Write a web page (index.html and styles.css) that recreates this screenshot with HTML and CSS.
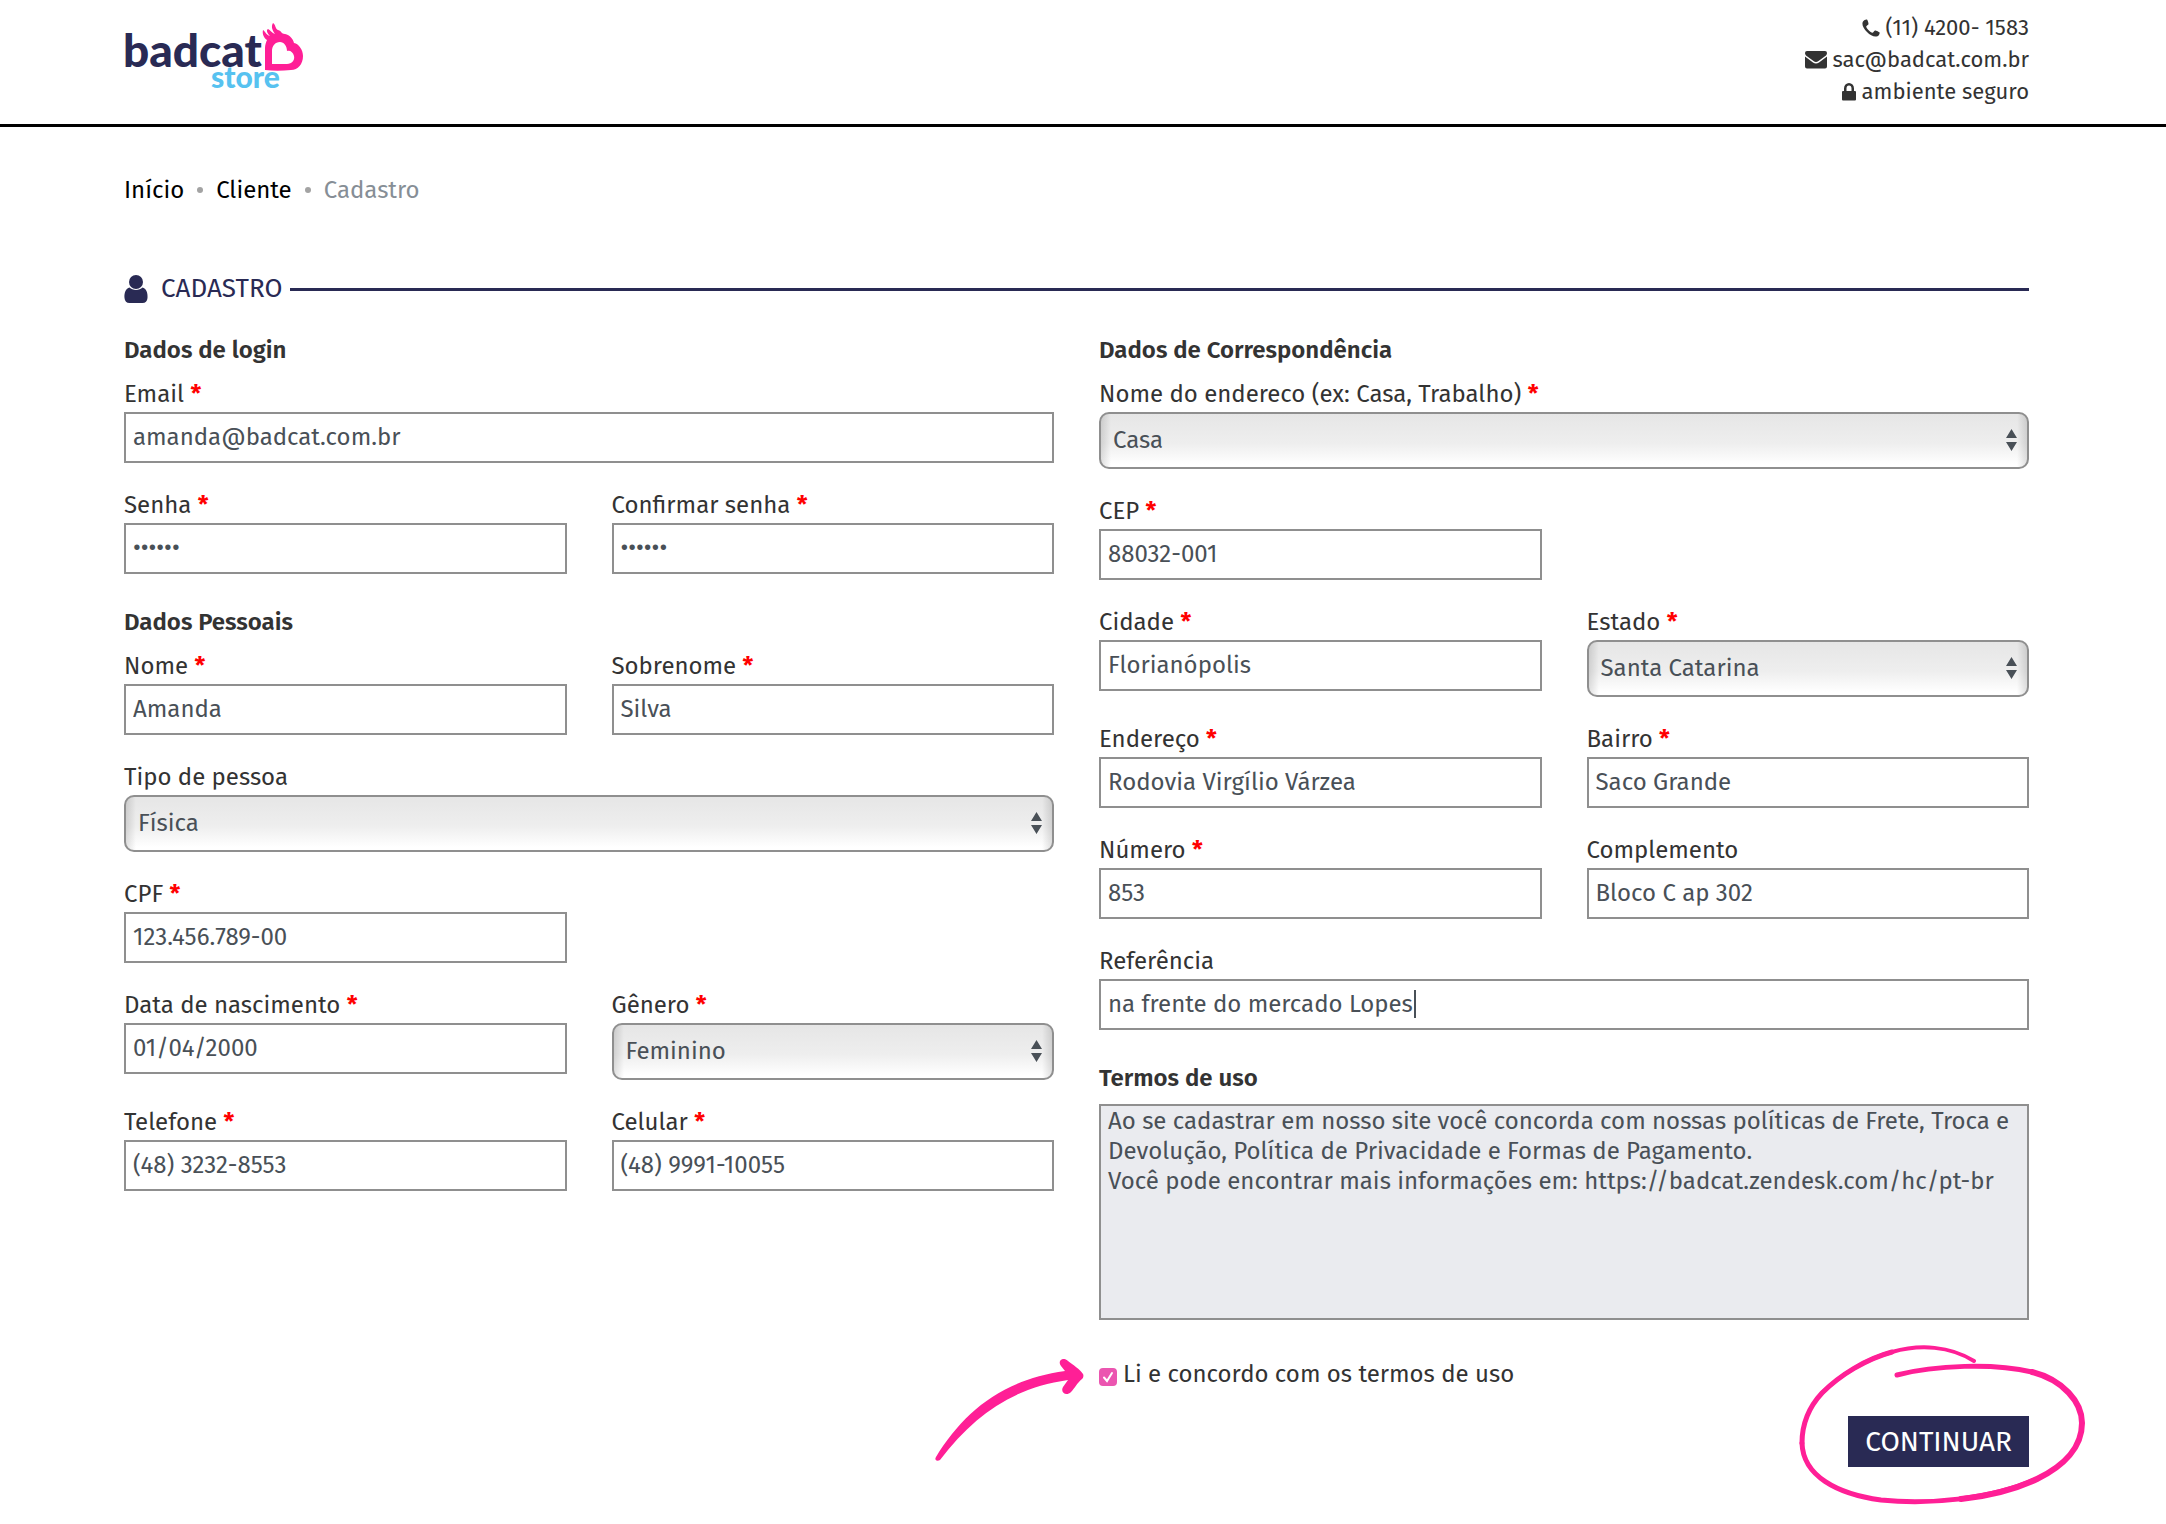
FILE: index.html
```
<!DOCTYPE html>
<html lang="pt-BR">
<head>
  <meta charset="utf-8">
  <meta name="viewport" content="width=device-width, initial-scale=1">
  <title>Cadastro - Badcat Store</title>
  <link rel="stylesheet" href="styles.css">
</head>
<body>
  <header class="site-header">
    <a class="logo" href="#" aria-label="badcat store">
      <svg class="logo-art" viewBox="0 0 184 74" width="184" height="74" aria-hidden="true">
        <text class="logo-name" x="-1" y="49">badcat</text>
        <text class="logo-tag" x="87" y="70">store</text>
        <path fill="#ff1f96" fill-rule="evenodd" d="M141 52V30C141 27 142 24 143 22C140 20 138 16 139 12C141 13 142 17 146 18C143 15 142 12 144 11C146 12 148 15 151 16C148 12 147 8 149 5C152 7 151 11 154 12C158 13 157 16 161 16C166 17 169 21 170 25C175 26 179 32 179 38C179 46 174 52 167 52C158 53 149 53 141 52ZM148 46H163C168 46 171 42 170 38C169 34 166 32 163 33C163 28 160 24 156 24C151 24 148 28 148 33Z"/>
      </svg>
    </a>
    <address class="contact">
      <span class="contact-line">
        <svg viewBox="0 0 18 18" width="18" height="18" aria-hidden="true"><path d="M1 2.500C2 1 4 .2 5 .6C5.600 1 6.500 3.800 6.500 5C6.500 6 4.300 6.800 4.200 7.600C4.200 9.300 8.700 13.700 10.400 13.800C11.300 13.800 12 11.600 13 11.500C14 11.400 17.300 13 17.600 13.500C17.900 14.500 17 16.500 15.500 17.200C12.500 18.500 8.500 16.600 5 13C1.500 9.500-.7 5.500 1 2.500Z"/></svg>
        (11) 4200- 1583
      </span>
      <a class="contact-line" href="mailto:sac@badcat.com.br">
        <svg viewBox="0 0 22 18" width="22" height="18" aria-hidden="true"><path d="M2 0H20Q22 0 22 2C22 3.500 21 4.500 20 5.300L13.500 10Q11 12 8.500 10L2 5.300C1 4.500 0 3.500 0 2Q0 0 2 0ZM0 5.500L8 11.500Q11 13.500 14 11.500L22 5.500V15.500Q22 17.500 20 17.500H2Q0 17.500 0 15.500Z"/></svg>
        sac@badcat.com.br
      </a>
      <span class="contact-line">
        <svg viewBox="0 0 14 18" width="14" height="18" aria-hidden="true"><path fill-rule="evenodd" d="M2 8V5.500A5 5.500 0 0 1 12 5.500V8H13Q14 8 14 9V16.500Q14 17.500 13 17.500H1Q0 17.500 0 16.500V9Q0 8 1 8ZM4.500 8H9.500V5.500A2.500 3 0 0 0 4.500 5.500Z"/></svg>
        ambiente seguro
      </span>
    </address>
  </header>

  <main class="page">
    <nav class="breadcrumb" aria-label="Navegação">
      <a class="crumb" href="#">Início</a>
      <span class="crumb-dot"></span>
      <a class="crumb" href="#">Cliente</a>
      <span class="crumb-dot"></span>
      <span class="crumb-current" aria-current="page">Cadastro</span>
    </nav>

    <h1 class="page-title">
      <svg viewBox="0 0 24 28" width="24" height="28" aria-hidden="true"><circle cx="12" cy="7" r="7"/><path d="M5.500 12.500C7 14 9.500 15 12 15S17 14 18.500 12.500C22 13.500 24 17.500 23.500 23Q23 28 18.500 28H5.500Q1 28 .5 23C0 17.500 2 13.500 5.500 12.500Z"/></svg>
      CADASTRO
    </h1>

    <form class="form">
      <div class="column">
        <h2 class="group-title">Dados de login</h2>
        <div class="field wide"><label class="label" for="email">Email <b class="req">*</b></label><input class="input" id="email" type="email" value="amanda@badcat.com.br"></div>
        <div class="field"><label class="label" for="senha">Senha <b class="req">*</b></label><input class="input" id="senha" type="password" value="123456"></div>
        <div class="field"><label class="label" for="senha2">Confirmar senha <b class="req">*</b></label><input class="input" id="senha2" type="password" value="123456"></div>

        <h2 class="group-title">Dados Pessoais</h2>
        <div class="field"><label class="label" for="nome">Nome <b class="req">*</b></label><input class="input" id="nome" type="text" value="Amanda"></div>
        <div class="field"><label class="label" for="sobrenome">Sobrenome <b class="req">*</b></label><input class="input" id="sobrenome" type="text" value="Silva"></div>
        <div class="field wide"><label class="label" for="tipo">Tipo de pessoa</label><select class="select" id="tipo"><option>Física</option><option>Jurídica</option></select></div>
        <div class="field alone"><label class="label" for="cpf">CPF <b class="req">*</b></label><input class="input" id="cpf" type="text" value="123.456.789-00"></div>
        <div class="field"><label class="label" for="nascimento">Data de nascimento <b class="req">*</b></label><input class="input" id="nascimento" type="text" value="01/04/2000"></div>
        <div class="field"><label class="label" for="genero">Gênero <b class="req">*</b></label><select class="select" id="genero"><option>Feminino</option><option>Masculino</option></select></div>
        <div class="field"><label class="label" for="telefone">Telefone <b class="req">*</b></label><input class="input" id="telefone" type="tel" value="(48) 3232-8553"></div>
        <div class="field"><label class="label" for="celular">Celular <b class="req">*</b></label><input class="input" id="celular" type="tel" value="(48) 9991-10055"></div>
      </div>

      <div class="column">
        <h2 class="group-title">Dados de Correspondência</h2>
        <div class="field wide"><label class="label" for="tipo-endereco">Nome do endereco (ex: Casa, Trabalho) <b class="req">*</b></label><select class="select" id="tipo-endereco"><option>Casa</option><option>Trabalho</option></select></div>
        <div class="field alone"><label class="label" for="cep">CEP <b class="req">*</b></label><input class="input" id="cep" type="text" value="88032-001"></div>
        <div class="field"><label class="label" for="cidade">Cidade <b class="req">*</b></label><input class="input" id="cidade" type="text" value="Florianópolis"></div>
        <div class="field"><label class="label" for="estado">Estado <b class="req">*</b></label><select class="select" id="estado"><option>Santa Catarina</option></select></div>
        <div class="field"><label class="label" for="endereco">Endereço <b class="req">*</b></label><input class="input" id="endereco" type="text" value="Rodovia Virgílio Várzea"></div>
        <div class="field"><label class="label" for="bairro">Bairro <b class="req">*</b></label><input class="input" id="bairro" type="text" value="Saco Grande"></div>
        <div class="field"><label class="label" for="numero">Número <b class="req">*</b></label><input class="input" id="numero" type="text" value="853"></div>
        <div class="field"><label class="label" for="complemento">Complemento</label><input class="input" id="complemento" type="text" value="Bloco C ap 302"></div>
        <div class="field wide"><label class="label" for="referencia">Referência</label><input class="input with-caret" id="referencia" type="text" value="na frente do mercado Lopes"></div>

        <div class="terms">
          <h2 class="terms-title"><label for="termos">Termos de uso</label></h2>
          <textarea class="terms-text" id="termos" readonly>Ao se cadastrar em nosso site você concorda com nossas políticas de Frete, Troca e Devolução, Política de Privacidade e Formas de Pagamento.
Você pode encontrar mais informações em: https://badcat.zendesk.com/hc/pt-br</textarea>
        </div>

        <div class="consent">
          <input class="check" id="aceite" type="checkbox" checked>
          <label for="aceite">Li e concordo com os termos de uso</label>
          <svg class="arrow-mark" viewBox="0 0 152 104" width="152" height="104" aria-hidden="true">
            <path fill="#ff1f96" d="M1 98C28 54 66 21 130 12L126 7C122 2 128-3 133 2C138 6 145 10 148 15C149 17 148 19 147 20C142 24 140 29 136 33C131 38 125 33 128 28L133 21C78 29 40 55 5 101C2 103-1 101 1 98Z"/>
          </svg>
        </div>

        <div class="actions">
          <button class="submit" type="submit">CONTINUAR</button>
          <svg class="ring-mark" viewBox="0 0 290 164" width="290" height="164" aria-hidden="true">
            <g fill="none" stroke="#ff1f96" stroke-linecap="round" stroke-linejoin="round">
              <path stroke-width="4" d="M175 17C151 2 121 0 93 8C67 15 41 31 23 49"/>
              <path stroke-width="5" d="M98 31C136 21 195 19 233 28M93 8C67 15 41 31 23 49C10 63 3 80 3 99"/>
              <path stroke-width="6" d="M233 28C264 36 283 58 283 79C283 103 265 122 238 135C217 145 190 152 162 155"/>
              <path stroke-width="5" d="M238 135C194 155 130 161 82 156C38 150 4 132 3 99"/>
            </g>
          </svg>
        </div>
      </div>
    </form>
  </main>
</body>
</html>
```
FILE: styles.css
```
* { box-sizing: border-box; }

body {
  margin: 0;
  min-height: 100vh;
  background: #fff;
  color: #333;
  font: 24px/30px "Fira Sans", "Noto Sans", sans-serif;
}

a { color: inherit; text-decoration: none; }

.site-header {
  display: flex;
  justify-content: space-between;
  align-items: flex-start;
  min-height: 127px;
  padding: 12px 137px 14px 124px;
  border-bottom: 3px solid #000;
}

.logo { display: block; margin-top: 6px; }
.logo-art { display: block; overflow: visible; }
.logo-name { font: 900 46px Lato, sans-serif; fill: #292a54; }
.logo-tag { font: 900 30px Lato, sans-serif; fill: #57c2f0; }

.contact {
  display: flex;
  flex-direction: column;
  align-items: flex-end;
  font-size: 22px;
  font-style: normal;
  line-height: 32px;
}

.contact-line { display: flex; align-items: center; gap: 6px; }
.contact-line svg { fill: #333; }

.page { padding: 48px 137px 57px 124px; }

.breadcrumb { display: flex; align-items: center; gap: 13px; color: #000; }
.crumb-dot { width: 6px; height: 6px; border-radius: 50%; background: #a3a3a3; }
.crumb-current { color: #868e96; }

.page-title {
  display: flex;
  align-items: center;
  gap: 13px;
  margin: 66px 0 25px;
  color: #292a54;
  font-size: 26px;
  font-weight: 400;
  line-height: 36px;
}

.page-title svg { fill: #292a54; }

.page-title::after {
  content: "";
  flex: 1;
  height: 3px;
  margin-left: -5px;
  background: #292a54;
}

.form,
.column {
  display: grid;
  grid-template-columns: repeat(2, minmax(0, 1fr));
  align-items: start;
  column-gap: 45px;
}

.column { align-content: start; row-gap: 30px; }

.group-title,
.terms-title { margin: 0; font-size: 24px; font-weight: 600; line-height: 36px; }

.group-title { grid-column: 1 / -1; margin-bottom: -16px; }
.terms-title { margin-bottom: 8px; }

.wide,
.terms,
.consent,
.actions { grid-column: 1 / -1; }
.alone,
.alone + .field { grid-column: 1; }

.label { display: block; padding-bottom: 6px; line-height: 24px; }
.req { color: #f00; }

.input,
.select,
.terms-text {
  display: block;
  width: 100%;
  margin: 0;
  border: 2px solid #8f8f8f;
  border-radius: 0;
  outline: 0;
  color: #495057;
  font: inherit;
}

.input { height: 51px; padding: 0 7px 2px; background: #fff; }

/* Static text caret after the typed value */
.with-caret {
  background: linear-gradient(#495057, #495057) 313px 9px / 2px 28px no-repeat #fff;
}

.select {
  height: 57px;
  padding: 0 30px 2px 12px;
  border-radius: 10px;
  appearance: none;
  background:
    url("data:image/svg+xml,%3Csvg xmlns='http://www.w3.org/2000/svg' width='11' height='22'%3E%3Cpath fill='%23495057' d='M0 9 5.500 0 11 9zM0 13h11l-5.500 9z'/%3E%3C/svg%3E") right 10px top 15px no-repeat,
    linear-gradient(90deg, rgba(0, 0, 0, .12), rgba(0, 0, 0, 0)) left / 10px 100% no-repeat,
    linear-gradient(270deg, rgba(0, 0, 0, .12), rgba(0, 0, 0, 0)) right / 10px 100% no-repeat,
    linear-gradient(#e6e6e6, #eee 55%, #fff 95%);
}

.terms-text {
  height: 216px;
  padding: 0 7px;
  resize: none;
  overflow: hidden;
  background: #eaebef;
}

.consent {
  position: relative;
  display: flex;
  align-items: center;
  gap: 6px;
  margin-top: 9px;
}

.check {
  width: 18px;
  height: 18px;
  margin: 6px 0 0;
  border-radius: 4px;
  appearance: none;
  background: #eb55b0 url("data:image/svg+xml,%3Csvg xmlns='http://www.w3.org/2000/svg' width='18' height='18'%3E%3Cpath fill='none' stroke='%23fff' stroke-width='2' stroke-linecap='round' d='M5 9.500 8 13 13 5'/%3E%3C/svg%3E") center no-repeat;
}

.arrow-mark { position: absolute; top: 0; left: -164px; }

.actions { position: relative; display: flex; justify-content: flex-end; margin-top: -3px; }

.submit {
  height: 51px;
  padding: 0 17px;
  border: 0;
  background: #292a54;
  color: #fff;
  font: 400 28px/36px "Fira Sans", "Noto Sans", sans-serif;
}

.ring-mark { position: absolute; top: -72px; right: -60px; pointer-events: none; }
```
